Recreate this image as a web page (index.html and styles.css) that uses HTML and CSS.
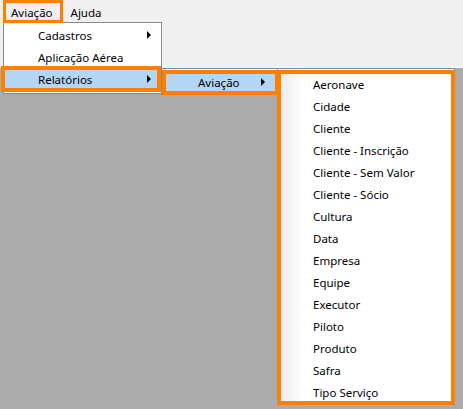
FILE: index.html
```html
<!DOCTYPE html>
<html lang="pt">
<head>
<meta charset="utf-8">
<title>Aviação</title>
<link rel="stylesheet" href="styles.css">
</head>
<body>
<div class="window">
  <div class="top">
    <div class="menubar">
      <span class="mb-item first">Aviação</span>
      <span class="mb-item">Ajuda</span>
    </div>
  </div>
</div>

<div class="menu menu1">
  <div class="item">Cadastros<span class="arrow"></span></div>
  <div class="item">Aplicação Aérea</div>
  <div class="item active">Relatórios<span class="arrow"></span></div>
</div>

<div class="menu menu2">
  <div class="item active line">Aviação<span class="arrow"></span></div>
</div>

<div class="menu menu3">
  <div class="item">Aeronave</div>
  <div class="item">Cidade</div>
  <div class="item">Cliente</div>
  <div class="item">Cliente - Inscrição</div>
  <div class="item">Cliente - Sem Valor</div>
  <div class="item">Cliente - Sócio</div>
  <div class="item">Cultura</div>
  <div class="item">Data</div>
  <div class="item">Empresa</div>
  <div class="item">Equipe</div>
  <div class="item">Executor</div>
  <div class="item">Piloto</div>
  <div class="item">Produto</div>
  <div class="item">Safra</div>
  <div class="item">Tipo Serviço</div>
</div>

<div class="mark mark-bar"></div>
<div class="mark mark-rel"></div>
<div class="mark mark-sub"></div>
<div class="mark mark-list"></div>
</body>
</html>
```

FILE: styles.css
```css
html, body {
  margin: 0;
  padding: 0;
}
body {
  width: 463px;
  height: 409px;
  background: #ababab;
  font-family: "Noto Sans", "DejaVu Sans", sans-serif;
  font-size: 11.5px;
  color: #000;
  position: relative;
  overflow: hidden;
}
.top {
  height: 67px;
  background: #f0f0f0;
  border-bottom: 1px solid #ffffff;
}
.menubar {
  display: flex;
  height: 22px;
  padding-left: 4px;
  line-height: 26px;
}
.mb-item {
  padding: 0 7px;
}
.mb-item.first {
  padding-right: 11px;
}
.menu {
  position: absolute;
  background: #ffffff;
  border: 1px solid #888888;
  box-sizing: border-box;
}
.item {
  position: relative;
  height: 22px;
  line-height: 23px;
  padding-left: 34px;
  white-space: nowrap;
}
.arrow {
  position: absolute;
  top: 7px;
  width: 0;
  height: 0;
  border-top: 4px solid transparent;
  border-bottom: 4px solid transparent;
  border-left: 4px solid #000;
}
.active {
  background: #b5d6f3;
}
.menu1 {
  left: 3px;
  top: 22px;
  width: 159px;
  padding: 1px 0 3px;
}
.menu1 .item {
  margin: 0 3px 0 1px;
  padding-left: 33px;
}
.menu1 .arrow {
  left: 142px;
}
.menu2 {
  left: 161px;
  top: 68px;
  width: 117px;
  padding: 2px 0 1px;
}
.menu2 .item {
  margin: 0 2px 0 3px;
  padding-left: 33px;
  height: 21px;
  border-bottom: 1px solid #3b80d0;
}
.menu2 .arrow {
  left: 96px;
}
.menu3 {
  left: 277px;
  top: 68px;
  width: 178px;
  height: 337px;
  padding-top: 4px;
  background: linear-gradient(to right, #ffffff 0, #ffffff 3px, #ececec 4px, #f7f7f7 16px, #ffffff 25px, #ffffff 100%);
}
.menu3 .item {
  padding-left: 35px;
}
.mark {
  position: absolute;
  border: 4px solid #ff7f00;
  box-sizing: border-box;
}
.mark-bar {
  left: 3px;
  top: 0;
  width: 60px;
  height: 23px;
  border-width: 3px;
}
.mark-rel {
  left: 1px;
  top: 66px;
  width: 160px;
  height: 26px;
}
.mark-sub {
  left: 162px;
  top: 70px;
  width: 117px;
  height: 25px;
}
.mark-list {
  left: 277px;
  top: 70px;
  width: 178px;
  height: 335px;
}
```
